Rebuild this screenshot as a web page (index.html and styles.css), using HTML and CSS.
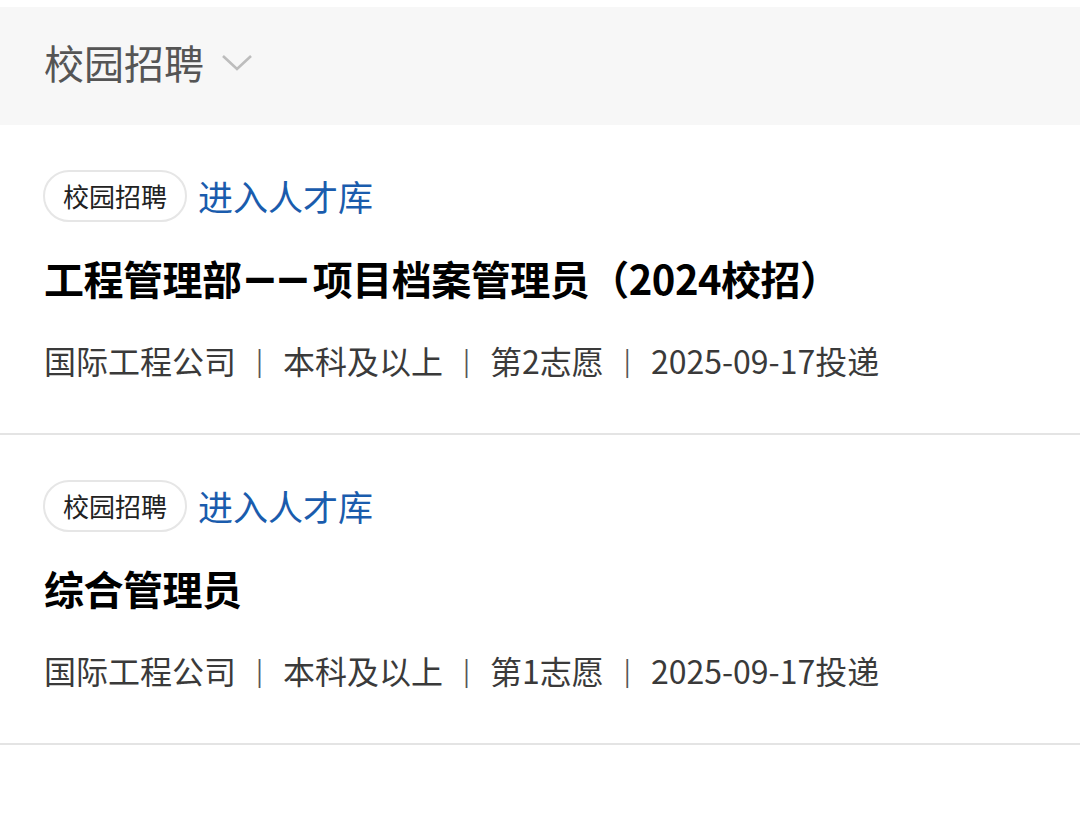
FILE: index.html
```html
<!DOCTYPE html>
<html lang="zh-CN">
<head>
<meta charset="utf-8">
<title>校园招聘</title>
<link rel="stylesheet" href="styles.css">
</head>
<body>
<div class="page">
  <div class="top-gap"></div>
  <header class="header">
    <span class="header-title">校园招聘</span>
    <svg class="chevron" width="32" height="18" viewBox="0 0 32 18"><polyline points="2,2 16,15 30,2" fill="none" stroke="#bdbdbd" stroke-width="2.6" stroke-linejoin="miter"/></svg>
  </header>
  <div class="list">
    <div class="item">
      <div class="tag-row">
        <span class="pill">校园招聘</span>
        <span class="link">进入人才库</span>
      </div>
      <div class="title">工程管理部<span class="dash">——</span>项目档案管理员（2024校招）</div>
      <div class="meta">
        <span>国际工程公司</span><span class="sep">|</span><span>本科及以上</span><span class="sep">|</span><span>第2志愿</span><span class="sep">|</span><span>2025-09-17投递</span>
      </div>
    </div>
    <div class="item">
      <div class="tag-row">
        <span class="pill">校园招聘</span>
        <span class="link">进入人才库</span>
      </div>
      <div class="title">综合管理员</div>
      <div class="meta">
        <span>国际工程公司</span><span class="sep">|</span><span>本科及以上</span><span class="sep">|</span><span>第1志愿</span><span class="sep">|</span><span>2025-09-17投递</span>
      </div>
    </div>
  </div>
</div>
</body>
</html>
```
FILE: styles.css
```css
* { box-sizing: border-box; }
html, body {
  margin: 0;
  padding: 0;
  background: #ffffff;
}
body {
  font-family: "Noto Sans CJK SC", "Noto Sans", sans-serif;
  width: 1080px;
  height: 837px;
  overflow: hidden;
}
.top-gap { height: 7px; }
.header {
  height: 118px;
  background: #f7f7f7;
  display: flex;
  align-items: center;
  padding-left: 44px;
  padding-bottom: 9px;
}
.header-title {
  font-size: 40px;
  line-height: 48px;
  color: #555555;
}
.chevron {
  margin-left: 17px;
  margin-top: 2px;
}
.item {
  padding: 45px 44px 49px 44px;
  border-bottom: 2px solid #e4e4e4;
}
.tag-row {
  display: flex;
  align-items: center;
  height: 52px;
}
.pill {
  height: 52px;
  padding: 0 18px;
  border: 2px solid #e6e6e6;
  border-radius: 26px;
  font-size: 26px;
  line-height: 48px;
  color: #222222;
  margin-left: -1px;
}
.link {
  margin-left: 11px;
  font-size: 35px;
  line-height: 48px;
  color: #1a5cad;
}
.title {
  margin-top: 26px;
  height: 60px;
  font-size: 40px;
  line-height: 60px;
  font-weight: 700;
  color: #000000;
  letter-spacing: -0.5px;
}
.dash {
  font-family: "Roboto", sans-serif;
  font-weight: 900;
  line-height: 1;
  letter-spacing: 3px;
  margin: 0 2px 0 3px;
}
.meta {
  margin-top: 28px;
  font-size: 32px;
  line-height: 48px;
  color: #3a3a3a;
  display: flex;
  align-items: center;
}
.sep {
  margin: 0 20px;
  font-size: 26px;
  color: #555555;
}
```
